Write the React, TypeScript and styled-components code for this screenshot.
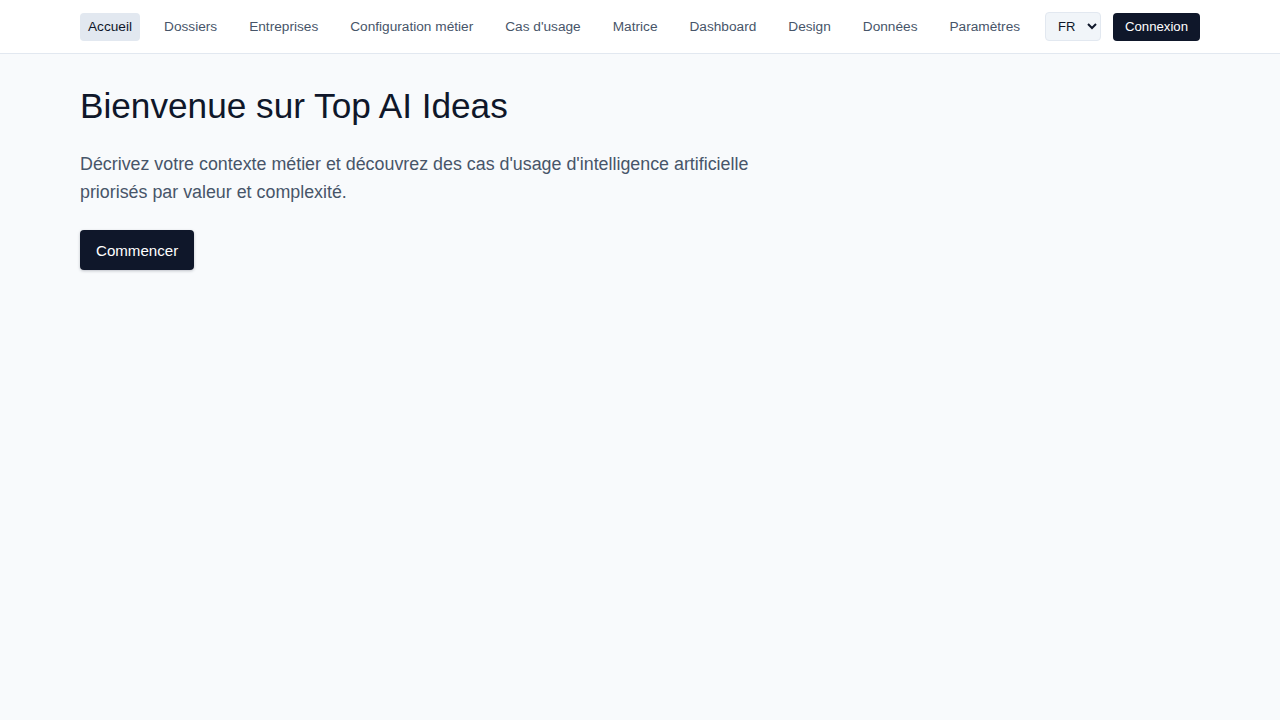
import React from "react";
import styled, { createGlobalStyle } from "styled-components";

const GlobalStyle = createGlobalStyle`
  html, body { margin: 0; padding: 0; }
  body {
    background: #f8fafc;
    font-family: "Liberation Sans", Arial, sans-serif;
    color: #0f172a;
    min-height: 100vh;
  }
  * { box-sizing: border-box; }
`;

const Header = styled.header`
  background: #ffffff;
  border-bottom: 1px solid #e2e8f0;
`;

const HeaderInner = styled.div`
  width: 1120px;
  margin: 0 auto;
  height: 53px;
  display: flex;
  align-items: center;
  gap: 12px;
`;

const Nav = styled.nav`
  display: flex;
  align-items: center;
  gap: 16px;
`;

const NavLink = styled.a<{ $active?: boolean }>`
  display: inline-flex;
  align-items: center;
  height: 28px;
  padding: 0 8px;
  border-radius: 4px;
  font-size: 13.66px;
  text-decoration: none;
  white-space: nowrap;
  color: ${(p) => (p.$active ? "#0f172a" : "#475569")};
  background: ${(p) => (p.$active ? "#e2e8f0" : "transparent")};
`;

const Actions = styled.div`
  margin-left: auto;
  display: flex;
  align-items: center;
  gap: 12px;
`;

const LangSelect = styled.select`
  height: 29px;
  width: 56px;
  padding: 0 4px 0 8px;
  border: 1px solid #e2e8f0;
  border-radius: 4px;
  background: #f1f5f9;
  font-family: "Liberation Sans", Arial, sans-serif;
  font-size: 13px;
  color: #0f172a;
`;

const SmallButton = styled.button`
  height: 28px;
  padding: 0 12px;
  border: none;
  border-radius: 4px;
  background: #0f172a;
  color: #ffffff;
  font-family: "Liberation Sans", Arial, sans-serif;
  font-size: 13.2px;
`;

const Main = styled.main`
  width: 1120px;
  margin: 0 auto;
  padding-top: 32px;
`;

const Title = styled.h1`
  margin: 0;
  font-weight: 400;
  font-size: 35.2px;
  line-height: 40px;
  color: #0f172a;
`;

const Lead = styled.p`
  margin: 24px 0 0;
  max-width: 672px;
  font-size: 17.85px;
  line-height: 28px;
  color: #475569;
`;

const PrimaryButton = styled.button`
  margin-top: 24px;
  height: 40px;
  padding: 0 16px;
  border: none;
  border-radius: 4px;
  background: #0f172a;
  color: #ffffff;
  font-family: "Liberation Sans", Arial, sans-serif;
  font-size: 15.1px;
  box-shadow: 0 1px 3px rgba(15, 23, 42, 0.25);
`;

const links = [
  "Accueil",
  "Dossiers",
  "Entreprises",
  "Configuration métier",
  "Cas d'usage",
  "Matrice",
  "Dashboard",
  "Design",
  "Données",
  "Paramètres",
];

export default function App() {
  return (
    <>
      <GlobalStyle />
      <Header>
        <HeaderInner>
          <Nav>
            {links.map((l, i) => (
              <NavLink key={l} href="#" $active={i === 0}>
                {l}
              </NavLink>
            ))}
          </Nav>
          <Actions>
            <LangSelect defaultValue="FR">
              <option value="FR">FR</option>
              <option value="EN">EN</option>
            </LangSelect>
            <SmallButton>Connexion</SmallButton>
          </Actions>
        </HeaderInner>
      </Header>
      <Main>
        <Title>Bienvenue sur Top AI Ideas</Title>
        <Lead>
          Décrivez votre contexte métier et découvrez des cas d'usage
          d'intelligence artificielle priorisés par valeur et complexité.
        </Lead>
        <PrimaryButton>Commencer</PrimaryButton>
      </Main>
    </>
  );
}
